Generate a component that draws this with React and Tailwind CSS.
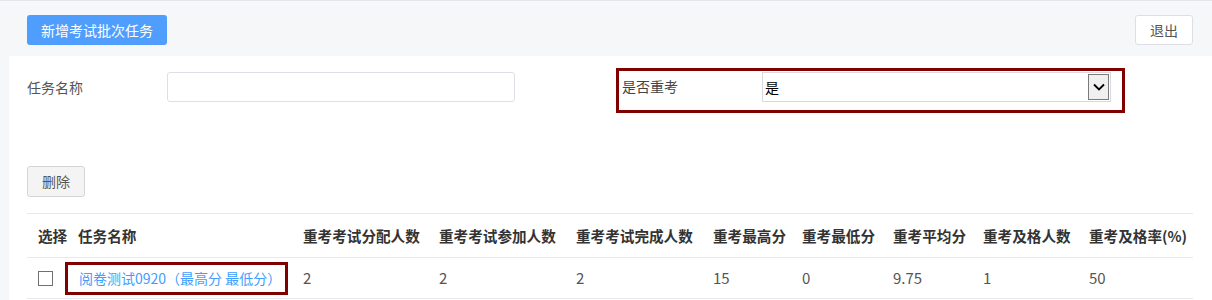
const FONT = { fontFamily: '"Microsoft YaHei", "Noto Sans CJK SC", "Noto Sans", sans-serif' };

const COLS = [
  { key: 'sel', title: '选择', w: 'w-[40px]' },
  { key: 'name', title: '任务名称', w: 'w-[225px]' },
  { key: 'assign', title: '重考考试分配人数', w: 'w-[136px]' },
  { key: 'join', title: '重考考试参加人数', w: 'w-[137px]' },
  { key: 'done', title: '重考考试完成人数', w: 'w-[137px]' },
  { key: 'max', title: '重考最高分', w: 'w-[89px]' },
  { key: 'min', title: '重考最低分', w: 'w-[91px]' },
  { key: 'avg', title: '重考平均分', w: 'w-[90px]' },
  { key: 'pass', title: '重考及格人数', w: 'w-[106px]' },
  { key: 'rate', title: '重考及格率(%)', w: 'w-[115px]' },
];

const ROWS = [
  { name: '阅卷测试0920（最高分 最低分）', assign: 2, join: 2, done: 2, max: 15, min: 0, avg: 9.75, pass: 1, rate: 50 },
];

function SelectBox() {
  return (
    <div className="w-[349px] h-[30px] border border-[#d8d8e0] bg-white flex items-center justify-between pl-[2px] pr-[1px]">
      <span className="text-[14px] text-black leading-none">是</span>
      <div className="w-[21px] h-[26px] border border-[#7a7a7a] bg-[#f0f0f0] flex items-center justify-center">
        <svg width="12" height="8" viewBox="0 0 12 8">
          <path d="M1 1.5 L6 6.5 L11 1.5" fill="none" stroke="#000" strokeWidth="1.8" />
        </svg>
      </div>
    </div>
  );
}

export default function App() {
  return (
    <div className="w-full h-[300px] overflow-hidden bg-[#f6f7f9] border-t border-[#e3e5ea]" style={FONT}>
      <div className="h-[55px] flex items-start justify-between pl-[27px] pr-[19px] pt-[14px]">
        <button className="h-[30px] w-[140px] rounded-[3px] bg-[#4f9efd] text-white text-[14px]">
          新增考试批次任务
        </button>
        <button className="h-[30px] w-[58px] rounded-[3px] bg-white border border-[#dcdfe6] text-[#555] text-[14px]">
          退出
        </button>
      </div>

      <div className="ml-[9px] bg-white pl-[18px] pr-[19px] pt-[12px] h-[245px]">
        <div className="flex items-start">
          <div className="w-[140px] h-[30px] mt-[4px] leading-[30px] text-[14px] text-[#555]">任务名称</div>
          <div className="w-[348px] h-[30px] mt-[4px] rounded-[3px] border border-[#dcdfe6] bg-white" />
          <div className="ml-[101px] w-[509px] h-[45px] border-[3px] border-[#800000] flex items-start pl-[3px] pt-[1px]">
            <div className="w-[140px] h-[30px] leading-[30px] text-[14px] text-[#444] -mt-[1px]">是否重考</div>
            <SelectBox />
          </div>
        </div>

        <button className="mt-[53px] h-[31px] w-[58px] rounded-[3px] bg-[#f4f4f5] border border-[#d3d4d6] text-[#555] text-[14px]">
          删除
        </button>

        <table className="mt-[16px] table-fixed border-collapse w-[1166px]">
          <colgroup>
            {COLS.map((c) => (
              <col key={c.key} className={c.w} />
            ))}
          </colgroup>
          <thead>
            <tr className="h-[44px] border-t border-b border-[#e9e9f2]">
              {COLS.map((c) => (
                <th key={c.key} className="pl-[11px] text-left text-[14.6px] font-bold text-[#333] whitespace-nowrap">
                  {c.title}
                </th>
              ))}
            </tr>
          </thead>
          <tbody>
            {ROWS.map((r, i) => (
              <tr key={i} className="h-[41px] border-b border-[#e9e9f2] text-[15px] text-[#555]">
                <td className="pl-[11px]">
                  <div className="w-[15px] h-[15px] border border-[#707070] bg-white" />
                </td>
                <td className="pl-0">
                  <div className="-ml-[2px] w-[223px] h-[33px] border-[3px] border-[#800000] pl-[11px] flex items-center text-[14px] text-[#409eff] whitespace-nowrap">
                    {r.name}
                  </div>
                </td>
                <td className="pl-[11px]">{r.assign}</td>
                <td className="pl-[11px]">{r.join}</td>
                <td className="pl-[11px]">{r.done}</td>
                <td className="pl-[11px]">{r.max}</td>
                <td className="pl-[11px]">{r.min}</td>
                <td className="pl-[11px]">{r.avg}</td>
                <td className="pl-[11px]">{r.pass}</td>
                <td className="pl-[11px]">{r.rate}</td>
              </tr>
            ))}
          </tbody>
        </table>
      </div>
    </div>
  );
}
